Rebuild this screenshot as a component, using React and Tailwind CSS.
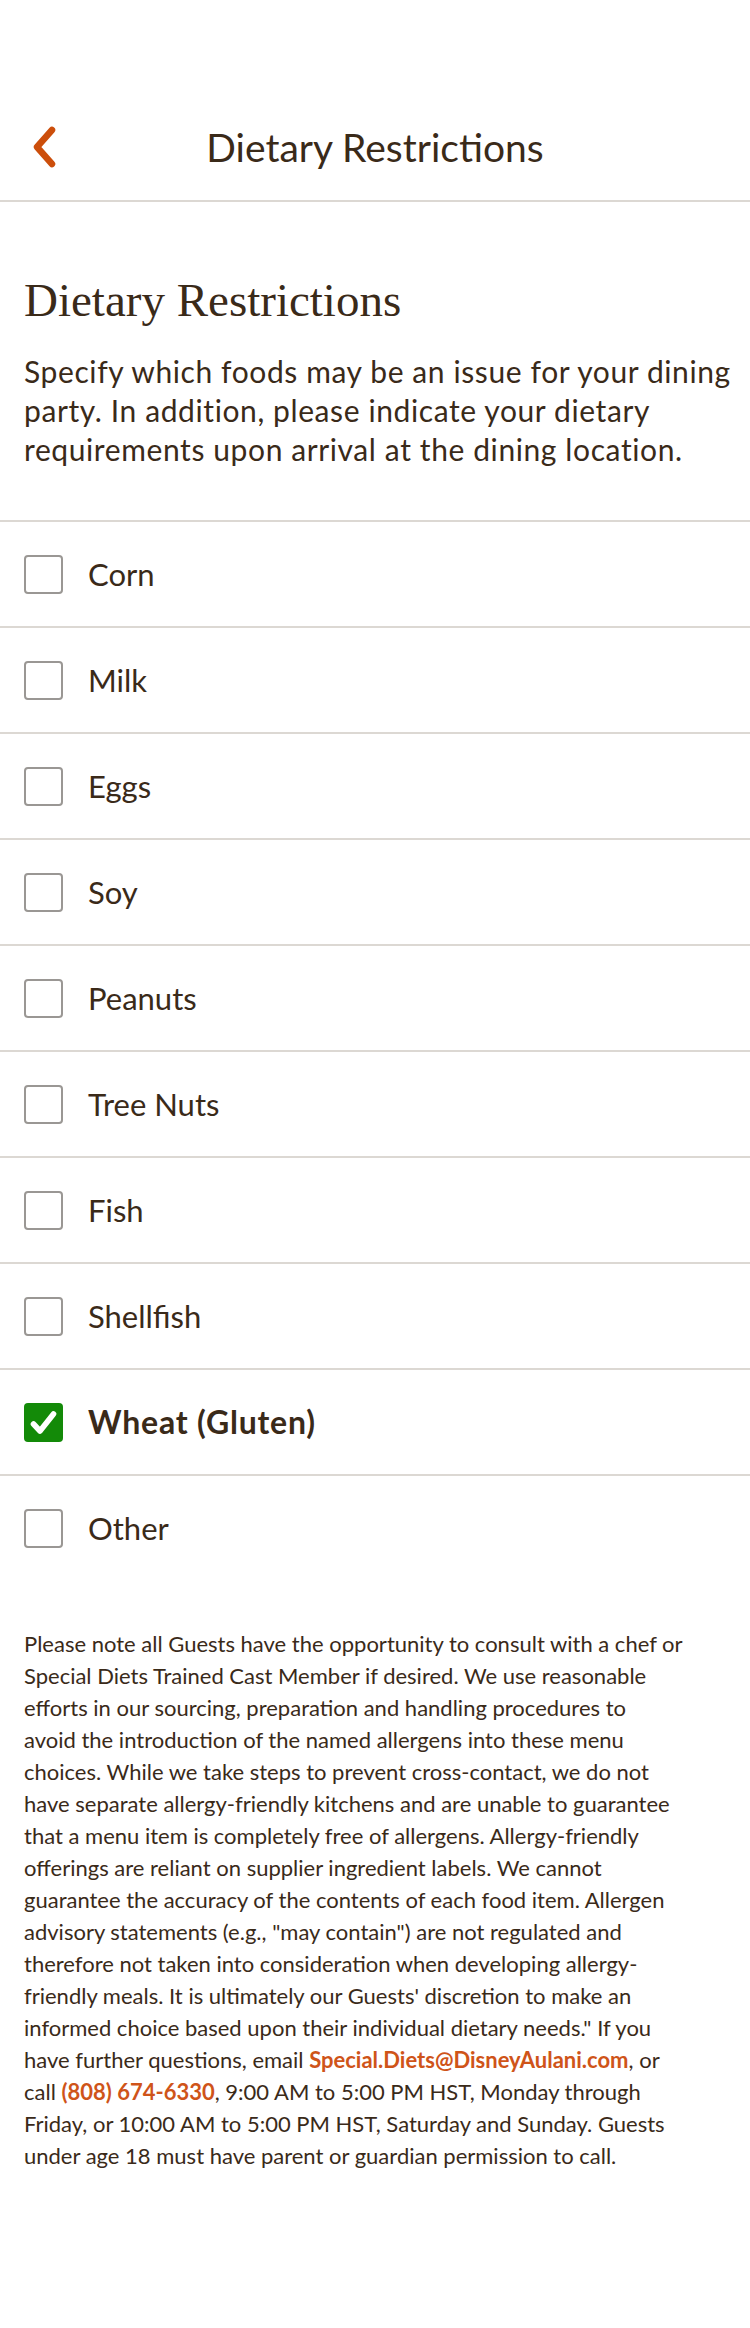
import React from "react";

const items = [
  { label: "Corn", checked: false },
  { label: "Milk", checked: false },
  { label: "Eggs", checked: false },
  { label: "Soy", checked: false },
  { label: "Peanuts", checked: false },
  { label: "Tree Nuts", checked: false },
  { label: "Fish", checked: false },
  { label: "Shellfish", checked: false },
  { label: "Wheat (Gluten)", checked: true },
  { label: "Other", checked: false },
];

function Checkbox({ checked }) {
  if (checked) {
    return (
      <span className="flex h-[39px] w-[39px] shrink-0 items-center justify-center rounded-[4px] bg-[#138a08]">
        <svg width="31" height="31" viewBox="0 0 31 31" fill="none">
          <path d="M5.5 17 L12 24 L25.5 7" stroke="#ffffff" strokeWidth="5.6" strokeLinecap="round" strokeLinejoin="round" />
        </svg>
      </span>
    );
  }
  return <span className="block h-[39px] w-[39px] shrink-0 rounded-[4px] border-2 border-[#9a9794] bg-white" />;
}

export default function App() {
  return (
    <div className="min-h-[2328px] w-[750px] bg-white text-[#3a2a19] font-['Lato',sans-serif]">
      <div className="h-[94px]" />
      <header className="grid h-[108px] grid-cols-[1fr_auto_1fr] items-center border-b-2 border-[#dcd8d3]">
        <div className="flex items-center pl-[30px]">
          <svg width="30" height="44" viewBox="0 0 30 44" fill="none">
            <path d="M22 5 L7 22 L22 39" stroke="#cc4e0b" strokeWidth="6.5" strokeLinecap="round" strokeLinejoin="round" />
          </svg>
        </div>
        <h1 className="text-[39px] leading-none font-normal">Dietary Restrictions</h1>
        <div />
      </header>

      <section className="px-[24px] pt-[70px] pb-[51px]">
        <h2 className="font-['Liberation_Serif',serif] text-[47px] leading-[56px] font-normal">Dietary Restrictions</h2>
        <p className="mt-[24px] whitespace-nowrap text-[30px] leading-[39px] tracking-[0.6px]">
          Specify which foods may be an issue for your dining
          <br />
          party. In addition, please indicate your dietary
          <br />
          requirements upon arrival at the dining location.
        </p>
      </section>

      <ul>
        {items.map((it) => (
          <li
            key={it.label}
            className="flex h-[106px] items-center gap-[25px] border-t-2 border-[#dcd8d3] pl-[24px]"
          >
            <Checkbox checked={it.checked} />
            <span className={it.checked ? "text-[32px] font-bold tracking-[0.8px]" : "text-[31px]"}>{it.label}</span>
          </li>
        ))}
      </ul>

      <p className="whitespace-nowrap px-[24px] pt-[48px] pb-[160px] text-[22px] leading-[32px]">
        Please note all Guests have the opportunity to consult with a chef or
        <br />
        Special Diets Trained Cast Member if desired. We use reasonable
        <br />
        efforts in our sourcing, preparation and handling procedures to
        <br />
        avoid the introduction of the named allergens into these menu
        <br />
        choices. While we take steps to prevent cross-contact, we do not
        <br />
        have separate allergy-friendly kitchens and are unable to guarantee
        <br />
        that a menu item is completely free of allergens. Allergy-friendly
        <br />
        offerings are reliant on supplier ingredient labels. We cannot
        <br />
        guarantee the accuracy of the contents of each food item. Allergen
        <br />
        advisory statements (e.g., "may contain") are not regulated and
        <br />
        therefore not taken into consideration when developing allergy-
        <br />
        friendly meals. It is ultimately our Guests' discretion to make an
        <br />
        informed choice based upon their individual dietary needs." If you
        <br />
        have further questions, email{" "}
        <a className="font-bold text-[#cf5419]">Special.Diets@DisneyAulani.com</a>, or
        <br />
        call <a className="font-bold text-[#cf5419]">(808) 674-6330</a>, 9:00 AM to 5:00 PM HST, Monday through
        <br />
        Friday, or 10:00 AM to 5:00 PM HST, Saturday and Sunday. Guests
        <br />
        under age 18 must have parent or guardian permission to call.
      </p>
    </div>
  );
}
